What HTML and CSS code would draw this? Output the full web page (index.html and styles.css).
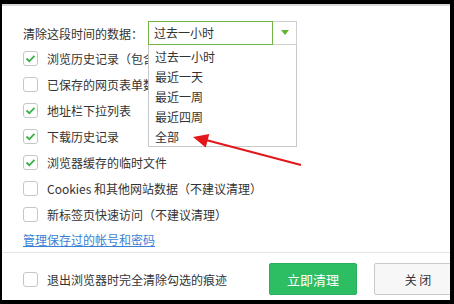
FILE: index.html
```html
<!DOCTYPE html>
<html lang="zh-CN">
<head>
    <meta charset="UTF-8">
    <meta name="viewport" content="width=device-width, initial-scale=1.0">
    <title>清除浏览数据</title>
    <link rel="stylesheet" href="styles.css">
</head>
<body>
    <div class="window">
        <div class="content">
            <!-- Time range -->
            <div class="range-row">
                <span class="range-label">清除这段时间的数据：</span>
                <div class="select">
                    <div class="select-value">过去一小时</div>
                    <div class="select-btn">
                        <svg width="8" height="6" viewBox="0 0 8 6"><path d="M0 0 H8 L4 5 Z" fill="#5cb531"/></svg>
                    </div>
                    <ul class="select-menu">
                        <li>过去一小时</li>
                        <li>最近一天</li>
                        <li>最近一周</li>
                        <li>最近四周</li>
                        <li>全部</li>
                    </ul>
                </div>
            </div>

            <!-- Data types -->
            <div class="options">
                <label class="opt"><span class="cb checked"><svg width="13" height="13" viewBox="0 0 13 13"><path d="M2.5 6.5 L5.3 9.2 L10.5 3.8" fill="none" stroke="#3cb14a" stroke-width="1.8"/></svg></span>浏览历史记录（包含最近访问的网址）</label>
                <label class="opt"><span class="cb"></span>已保存的网页表单数据</label>
                <label class="opt"><span class="cb checked"><svg width="13" height="13" viewBox="0 0 13 13"><path d="M2.5 6.5 L5.3 9.2 L10.5 3.8" fill="none" stroke="#3cb14a" stroke-width="1.8"/></svg></span>地址栏下拉列表</label>
                <label class="opt"><span class="cb checked"><svg width="13" height="13" viewBox="0 0 13 13"><path d="M2.5 6.5 L5.3 9.2 L10.5 3.8" fill="none" stroke="#3cb14a" stroke-width="1.8"/></svg></span>下载历史记录</label>
                <label class="opt"><span class="cb checked"><svg width="13" height="13" viewBox="0 0 13 13"><path d="M2.5 6.5 L5.3 9.2 L10.5 3.8" fill="none" stroke="#3cb14a" stroke-width="1.8"/></svg></span>浏览器缓存的临时文件</label>
                <label class="opt"><span class="cb"></span>Cookies 和其他网站数据（不建议清理）</label>
                <label class="opt"><span class="cb"></span>新标签页快速访问（不建议清理）</label>
            </div>

            <div class="link-row">
                <a href="#" class="manage-link">管理保存过的帐号和密码</a>
            </div>
        </div>

        <div class="footer">
            <label class="opt footer-opt"><span class="cb"></span>退出浏览器时完全清除勾选的痕迹</label>
            <button class="btn btn-primary">立即清理</button>
            <button class="btn btn-close">关 闭</button>
        </div>
    </div>

    <!-- Annotation arrow -->
    <svg class="arrow" width="454" height="304" viewBox="0 0 454 304">
        <line x1="301" y1="165" x2="206" y2="140" stroke="#e3171b" stroke-width="2"/>
        <polygon points="193,137 209.3,134 205.7,147.6" fill="#e3171b"/>
    </svg>
</body>
</html>
```

FILE: styles.css
```css
* {
    box-sizing: border-box;
}
body {
    margin: 0;
    width: 454px;
    height: 304px;
    background-color: #000;
    position: relative;
    overflow: hidden;
    font-family: "Noto Sans CJK SC", "Noto Sans", sans-serif;
    font-size: 12px;
    color: #333;
}
.window {
    position: absolute;
    top: 4px;
    left: 2px;
    width: 448px;
    height: 296px;
    background-color: #fff;
    border-top: 2px solid #d9d9d9;
    overflow: hidden;
    z-index: 1;
}
.content {
    padding: 15px 0 0 21px;
}
.range-row {
    display: flex;
    align-items: center;
    height: 24px;
}
.range-label {
    width: 125px;
}
.select {
    position: relative;
    display: flex;
    width: 149px;
    height: 24px;
}
.select-value {
    flex: 1;
    border: 1px solid #72b443;
    padding-left: 5px;
    line-height: 22px;
}
.select-btn {
    width: 24px;
    border: 1px solid #cfcfcf;
    border-left: none;
    display: flex;
    align-items: center;
    justify-content: center;
}
.select-menu {
    position: absolute;
    top: 100%;
    left: 0;
    width: 149px;
    height: 102px;
    margin: 0;
    padding: 2px 0 0 6px;
    list-style: none;
    background-color: #fff;
    border: 1px solid #c8c8c8;
    border-top: none;
    z-index: 2;
}
.select-menu li {
    height: 20px;
    line-height: 20px;
}
.options {
    display: flex;
    flex-direction: column;
}
.opt {
    display: flex;
    align-items: center;
    height: 26px;
    white-space: nowrap;
}
.cb {
    width: 15px;
    height: 15px;
    border: 1px solid #c6c6c6;
    border-radius: 3px;
    margin-right: 9px;
    display: flex;
    align-items: center;
    justify-content: center;
    flex-shrink: 0;
}
.link-row {
    height: 25px;
    display: flex;
    align-items: center;
}
.manage-link {
    color: #3a7fd6;
    text-decoration: underline;
}
.footer {
    display: flex;
    align-items: center;
    border-top: 1px solid #e6e6e6;
    padding: 10px 0 0 21px;
}
.footer-opt {
    flex: 1;
    height: 32px;
}
.btn {
    width: 88px;
    height: 32px;
    border-radius: 2px;
    font-family: inherit;
    font-size: 13px;
    flex-shrink: 0;
}
.btn-primary {
    background-color: #2dbd63;
    border: 1px solid #29b05c;
    color: #fff;
}
.btn-close {
    margin-left: 17px;
    margin-right: -12px;
    background-color: #f7f7f7;
    border: 1px solid #cacaca;
    color: #333;
    font-size: 12px;
}
.arrow {
    position: absolute;
    top: 0;
    left: 0;
    z-index: 5;
    pointer-events: none;
}
```
